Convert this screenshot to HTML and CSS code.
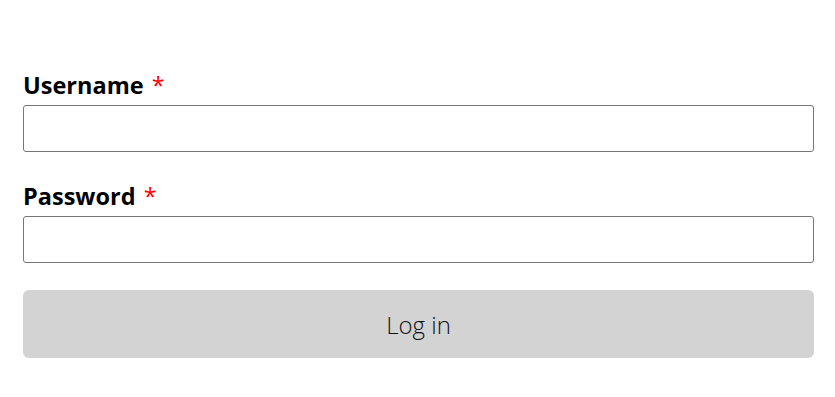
FILE: index.html
```html
<!DOCTYPE html>
<html>
<head>
<meta charset="utf-8">
<link rel="stylesheet" href="styles.css">
</head>
<body>
<form class="login">
  <div class="field">
    <label class="label" for="u">Username <span class="req">*</span></label>
    <input class="input" id="u" type="text">
  </div>
  <div class="field">
    <label class="label" for="p">Password <span class="req">*</span></label>
    <input class="input" id="p" type="password">
  </div>
  <button class="btn" type="button">Log in</button>
</form>
</body>
</html>
```
FILE: styles.css
```css
html, body { margin: 0; padding: 0; background: #fff; }
body { font-family: "Open Sans", Lato, sans-serif; color: #000; }
.login {
  display: flex;
  flex-direction: column;
  padding: 70px 21px 0 23px;
}
.field { display: flex; flex-direction: column; margin-bottom: 27px; }
.field:first-child { margin-bottom: 29px; }
.label {
  font-size: 23.5px;
  font-weight: 700;
  line-height: 30px;
  margin-bottom: 5px;
}
.req { color: #f00; font-weight: 400; margin-left: 2px; }
.input {
  box-sizing: border-box;
  height: 47px;
  border: 1px solid #767676;
  border-radius: 3px;
  margin: 0;
  font: inherit;
}
.btn {
  height: 68px;
  border: none;
  border-radius: 6px;
  background: #d3d3d3;
  color: #111;
  font-family: inherit;
  font-size: 24px;
  font-weight: 300;
}
```
